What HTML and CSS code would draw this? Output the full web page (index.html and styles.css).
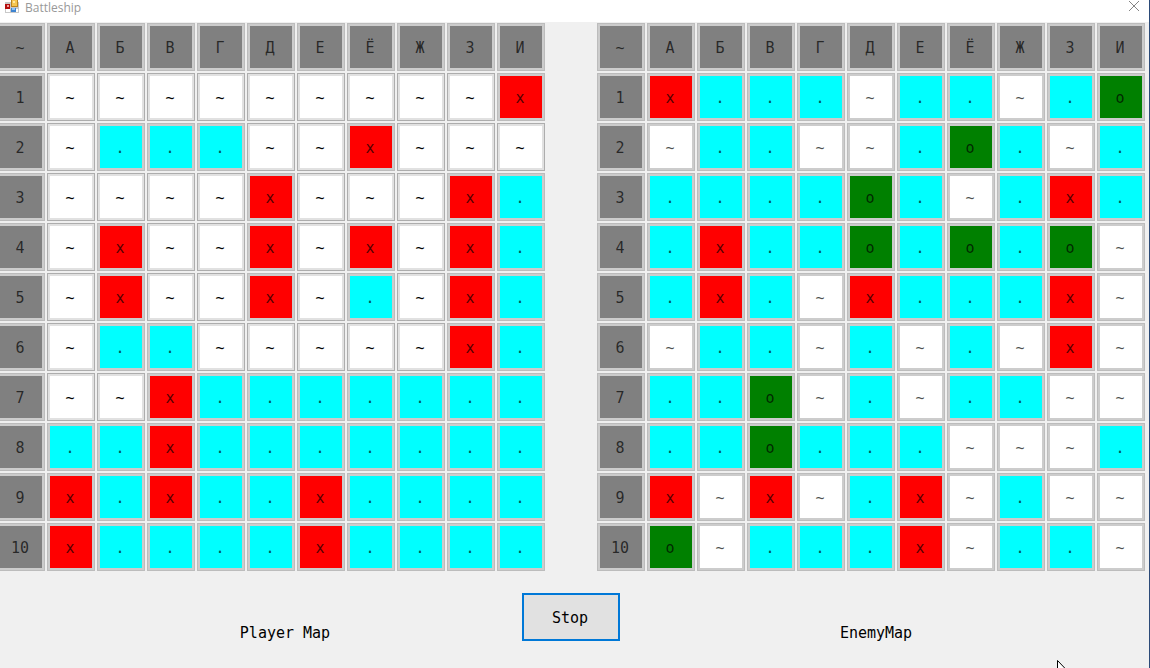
FILE: index.html
```html
<!DOCTYPE html>
<html lang="ru">
<head>
<meta charset="utf-8">
<title>Battleship</title>
<link rel="stylesheet" href="styles.css">
</head>
<body>
<div class="window">
  <header class="titlebar">
    <svg class="app-icon" width="14" height="13" viewBox="0 0 14 13" aria-hidden="true">
      <rect x="0" y="2" width="14" height="11" fill="#c9c9c9"/>
      <path d="M1 9h4v3H1zM11 9h2v3h-2z" fill="#fff"/>
      <rect x="0" y="4" width="5" height="5" fill="#b40f0f"/>
      <rect x="2" y="5" width="2" height="2" fill="#f4a0a0"/>
      <rect x="6" y="0" width="7" height="7" fill="#b98420"/>
      <rect x="7" y="0" width="5" height="6" fill="#f6c650"/>
      <rect x="8" y="1" width="2" height="2" fill="#fde9a5"/>
      <rect x="6" y="8" width="5" height="4" fill="#3d83d0"/>
      <rect x="7" y="8" width="3" height="2" fill="#8fc3f5"/>
    </svg>
    <span class="title">Battleship</span>
    <button class="close" type="button" aria-label="Close">
      <svg width="10" height="10" viewBox="0 0 10 10"><path d="M0 0L10 10M10 0L0 10" stroke="#858585" fill="none"/></svg>
    </button>
  </header>
  <main class="boards">
    <section class="board" id="player" aria-labelledby="player-label"></section>
    <section class="board" id="enemy" aria-labelledby="enemy-label"></section>
  </main>
  <footer class="controls">
    <span class="label label-player" id="player-label">Player Map</span>
    <button class="stop" type="button">Stop</button>
    <span class="label label-enemy" id="enemy-label">EnemyMap</span>
  </footer>
  <svg class="cursor" width="12" height="19" viewBox="0 0 12 19" aria-hidden="true">
    <path d="M.5 .5V16.5L4.5 12.8L7 18L9 17L6.700 12H11.500Z" fill="#fff" stroke="#000"/>
  </svg>
</div>
<script src="board.js"></script>
</body>
</html>
```
FILE: styles.css
```css
* {
  box-sizing: border-box;
}

body {
  margin: 0;
  background: #f0f0f0;
  color: #000;
  font: 15px/18px "DejaVu Sans Mono", monospace;
}

button {
  margin: 0;
  padding: 0;
  font: inherit;
  color: inherit;
}

.window {
  position: relative;
  min-height: 100vh;
  overflow: hidden;
  border-right: 1px solid #2b4a78;
}

.titlebar {
  display: flex;
  align-items: flex-start;
  gap: 6px;
  height: 22px;
  padding: 0 10px 0 5px;
  background: #fff;
  color: #999;
  font: 12px/16px "Open Sans", "Noto Sans", sans-serif;
}

.close {
  display: flex;
  margin-left: auto;
  padding-top: 1px;
  border: 0;
  background: none;
}

.boards {
  display: grid;
  grid-template-columns: 1fr 1fr;
  column-gap: 52px;
  margin-left: -3px;
  padding: 1px 4px 0 0;
}

.board {
  display: grid;
  grid-template-columns: repeat(11, minmax(0, 1fr));
  gap: 2px;
}

.cell {
  aspect-ratio: 1;
  padding: 2px 2px 0 0;
  border: 1px solid #adadad;
  box-shadow: inset 0 0 0 2px #e1e1e1;
  background: #fff;
}

.cell:disabled {
  border-color: #bcbcbc;
  box-shadow: inset 0 0 0 2px #ccc;
  color: rgba(0, 0, 0, 0.7);
}

.cell.head {
  background: #808080;
}

.cell.miss {
  background: #0ff;
}

.cell.hit {
  background: #f00;
}

.cell.ship {
  background: #008000;
}

.controls {
  display: grid;
  grid-template-columns: 1fr auto 1fr;
  align-items: end;
  padding: 22px 7px 0 0;
  text-align: center;
}

.label {
  position: relative;
  line-height: 16px;
}

.label-player {
  padding-left: 48px;
}

.label-enemy {
  padding-right: 10px;
}

.stop {
  width: 98px;
  height: 48px;
  padding: 2px 2px 0 0;
  border: 2px solid #0078d7;
  background: #e1e1e1;
}

.cursor {
  position: absolute;
  left: 1057px;
  top: 660px;
}
```
FILE: board.js
```js
const columns = "АБВГДЕЁЖЗИ";
const kinds = { ".": "miss", "x": "hit", "o": "ship" };

const maps = {
  player: [
    "~~~~~~~~~x",
    "~...~~x~~~",
    "~~~~x~~~x.",
    "~x~~x~x~x.",
    "~x~~x~.~x.",
    "~..~~~~~x.",
    "~~x.......",
    "..x.......",
    "x.x..x....",
    "x....x...."
  ],
  enemy: [
    "x...~..~.o",
    "~..~~.o.~.",
    "....o.~.x.",
    ".x..o.o.o~",
    ".x.~x...x~",
    "~..~.~.~x~",
    "..o~.~..~~",
    "..o...~~~.",
    "x~x~.x~.~~",
    "o~...x~..~"
  ]
};

function addCell(board, text, kind, disabled) {
  const cell = document.createElement("button");
  cell.type = "button";
  cell.className = kind ? "cell " + kind : "cell";
  cell.textContent = text;
  cell.disabled = disabled;
  board.append(cell);
}

for (const [id, rows] of Object.entries(maps)) {
  const board = document.getElementById(id);
  for (const letter of "~" + columns) addCell(board, letter, "head", true);
  rows.forEach((row, index) => {
    addCell(board, String(index + 1), "head", true);
    for (const mark of row) {
      addCell(board, mark, kinds[mark], id === "enemy" || mark !== "~");
    }
  });
}
```
